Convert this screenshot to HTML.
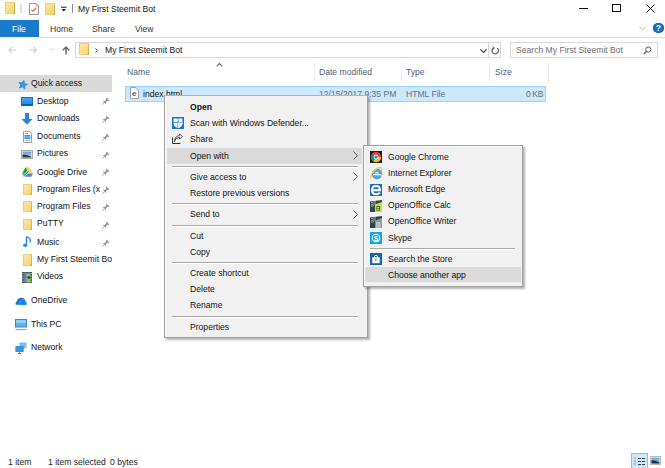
<!DOCTYPE html>
<html><head><meta charset="utf-8">
<style>
*{margin:0;padding:0;box-sizing:border-box}
html,body{width:665px;height:468px;overflow:hidden;background:#fff}
body{position:relative;font-family:"Liberation Sans",sans-serif;font-size:8.6px;color:#000}
.a{position:absolute;white-space:nowrap}
.t{position:absolute;white-space:nowrap;line-height:10px}
svg{position:absolute;overflow:visible}
.fold{position:absolute;background:linear-gradient(135deg,#fde7a0,#f6d46f);border:1px solid #ead07a;border-right-color:#dcb552}
.fold::after{content:"";position:absolute;right:-1px;bottom:-1px;width:0;height:0;border-left:2px solid transparent;border-bottom:4px solid #d9ad3e}
.pin{position:absolute}
.sep{position:absolute;height:2px;border-top:1px solid #a9a9a9;border-bottom:1px solid #fff}
.arr{position:absolute}
.hd{color:#4c607a}
.g{color:#6d6d6d}
</style></head><body>
<!-- ============ title bar ============ -->
<div class="fold" style="left:5px;top:2px;width:10px;height:12px"></div>
<div class="a" style="left:20px;top:4px;width:2px;height:9px;background:#e0e0e0"></div>
<svg style="left:29px;top:3px" width="10" height="12" viewBox="0 0 10 12">
 <path d="M0.5 0.5H7L9.5 3V11.5H0.5Z" fill="#fff" stroke="#8a8a8a" stroke-width=".9"/>
 <path d="M7 0.5V3H9.5" fill="none" stroke="#9a9a9a" stroke-width=".6"/>
 <path d="M2.4 6.6L4 8.2L7.4 4.8" fill="none" stroke="#e56a45" stroke-width="1.3"/>
</svg>
<div class="fold" style="left:45px;top:3px;width:10px;height:12px"></div>
<svg style="left:61px;top:6px" width="6" height="6" viewBox="0 0 6 6">
 <path d="M0 1.2H5.5" stroke="#111" stroke-width="1"/>
 <path d="M0.6 3H4.9L2.75 5.5Z" fill="#111"/>
</svg>
<div class="a" style="left:72px;top:4px;width:1px;height:9px;background:#8a8a8a"></div>
<div class="t" style="left:78px;top:4px;font-size:8.6px;color:#111">My First Steemit Bot</div>
<div class="a" style="left:579px;top:8px;width:9px;height:1px;background:#111"></div>
<div class="a" style="left:612px;top:4px;width:9px;height:8px;border:1px solid #111"></div>
<svg style="left:646px;top:4px" width="9" height="9" viewBox="0 0 9 9">
 <path d="M0.5 0.5L8.5 8.5M8.5 0.5L0.5 8.5" stroke="#111" stroke-width="1"/>
</svg>

<!-- ============ ribbon ============ -->
<div class="a" style="left:0;top:20px;width:39px;height:17px;background:#1979ca"></div>
<div class="t" style="left:12px;top:24px;color:#fff">File</div>
<div class="t" style="left:50px;top:24px;color:#333">Home</div>
<div class="t" style="left:92px;top:24px;color:#333">Share</div>
<div class="t" style="left:135px;top:24px;color:#333">View</div>
<div class="a" style="left:39px;top:37px;width:626px;height:1px;background:#dadbdc"></div>
<svg style="left:639px;top:26px" width="7" height="5" viewBox="0 0 7 5">
 <path d="M0.5 0.8L3.5 3.8L6.5 0.8" fill="none" stroke="#b0b0b0" stroke-width="1"/>
</svg>
<div class="a" style="left:653px;top:23px;width:10.5px;height:10px;border-radius:50%;background:#1570c6;box-shadow:inset 0 0 0 .6px #0b5fae;color:#fff;font-weight:bold;font-size:8.5px;line-height:10.5px;text-align:center">?</div>

<!-- ============ nav bar ============ -->
<svg style="left:8px;top:46px" width="9" height="8" viewBox="0 0 9 8">
 <path d="M8 4H1M4.2 0.8L1 4L4.2 7.2" fill="none" stroke="#cdcdcd" stroke-width="1.2"/>
</svg>
<svg style="left:29px;top:46px" width="9" height="8" viewBox="0 0 9 8">
 <path d="M0.5 4H7.5M4.3 0.8L7.5 4L4.3 7.2" fill="none" stroke="#cdcdcd" stroke-width="1.2"/>
</svg>
<svg style="left:49px;top:48px" width="5" height="3" viewBox="0 0 5 3">
 <path d="M0.3 0.3L2.5 2.5L4.7 0.3" fill="none" stroke="#cdcdcd" stroke-width=".9"/>
</svg>
<svg style="left:62px;top:46px" width="8" height="9" viewBox="0 0 8 9">
 <path d="M4 8.5V1.2M0.8 4.3L4 1L7.2 4.3" fill="none" stroke="#6a6a6a" stroke-width="1.5"/>
</svg>
<div class="a" style="left:75px;top:42px;width:426px;height:16px;border:1px solid #d9d9d9"></div>
<div class="fold" style="left:79px;top:43px;width:10px;height:12px"></div>
<svg style="left:95px;top:48px" width="3" height="5" viewBox="0 0 3 5">
 <path d="M0.4 0.4L2.4 2.5L0.4 4.6" fill="none" stroke="#555" stroke-width=".9"/>
</svg>
<div class="t" style="left:105px;top:45px;color:#111">My First Steemit Bot</div>
<svg style="left:480px;top:48.5px" width="7" height="4" viewBox="0 0 7 4">
 <path d="M0.4 0.4L3.5 3.4L6.6 0.4" fill="none" stroke="#444" stroke-width="1.2"/>
</svg>
<div class="a" style="left:488px;top:42px;width:1px;height:16px;background:#d9d9d9"></div>
<svg style="left:491px;top:46px" width="9" height="9" viewBox="0 0 9 9">
 <path d="M6.2 2.2A3.2 3.2 0 1 1 2.6 2" fill="none" stroke="#555" stroke-width="1.1"/>
 <path d="M1.6 0.6L3.4 2.1L1.6 3.6" fill="none" stroke="#555" stroke-width="1"/>
</svg>
<div class="a" style="left:510px;top:42px;width:148px;height:16px;border:1px solid #d9d9d9"></div>
<div class="t" style="left:516px;top:45px;color:#6d6d6d">Search My First Steemit Bot</div>
<svg style="left:643px;top:46px" width="9" height="9" viewBox="0 0 9 9">
 <circle cx="5.3" cy="3.5" r="2.6" fill="none" stroke="#555" stroke-width="1"/>
 <path d="M3.4 5.4L0.8 8" stroke="#555" stroke-width="1.3"/>
</svg>

<!-- ============ headers ============ -->
<svg style="left:216px;top:63px" width="7" height="4" viewBox="0 0 7 4">
 <path d="M0.6 3.4L3.5 0.6L6.4 3.4" fill="none" stroke="#6a6a6a" stroke-width="1.1"/>
</svg>
<div class="t hd" style="left:127px;top:67px">Name</div>
<div class="a" style="left:314px;top:63px;width:1px;height:19px;background:#ebebeb"></div>
<div class="t hd" style="left:319px;top:67px">Date modified</div>
<div class="a" style="left:401px;top:63px;width:1px;height:19px;background:#ebebeb"></div>
<div class="t hd" style="left:406px;top:67px">Type</div>
<div class="a" style="left:489px;top:63px;width:1px;height:19px;background:#ebebeb"></div>
<div class="t hd" style="left:495px;top:67px">Size</div>
<div class="a" style="left:548px;top:63px;width:1px;height:19px;background:#ebebeb"></div>

<!-- ============ selected row ============ -->
<div class="a" style="left:125px;top:86px;width:421px;height:16px;background:#cce8ff;border:1px solid #99d1ff"></div>
<svg style="left:130px;top:87px" width="9" height="12" viewBox="0 0 9 12">
 <path d="M0.5 0.5H6L8.5 3V11.5H0.5Z" fill="#fff" stroke="#a2a2a2"/>
 <path d="M6 0.5V3H8.5" fill="none" stroke="#c8c8c8" stroke-width=".6"/>
 <text x="4.3" y="9.3" font-family="Liberation Sans" font-size="8" fill="#1f6fc5" text-anchor="middle" font-weight="bold">e</text>
</svg>
<div class="t" style="left:143px;top:89px;color:#111">index.html</div>
<div class="t g" style="left:319px;top:89px">12/15/2017 9:35 PM</div>
<div class="t g" style="left:406px;top:89px">HTML File</div>
<div class="t g" style="left:526px;top:89px;letter-spacing:-.4px">0 KB</div>

<!-- ============ nav pane ============ -->
<div class="a" style="left:0;top:75px;width:112px;height:17px;background:#d9d9d9"></div>
<svg style="left:17.5px;top:79.5px" width="10" height="9" viewBox="0 0 10 10">
 <path transform="rotate(12 5 5)" d="M5 0.3L6.3 3.6L9.8 3.8L7.1 6L8 9.6L5 7.6L2 9.6L2.9 6L0.2 3.8L3.7 3.6Z" fill="#2aa0f0" stroke="#1a7cc8" stroke-width=".7" stroke-linejoin="round"/>
</svg>
<div class="t" style="left:31px;top:78px;color:#111">Quick access</div>

<!-- desktop -->
<div class="a" style="left:21px;top:97px;width:12px;height:9px;background:linear-gradient(#44a8f4,#1e8ae8);border:1px solid #1272c8;border-bottom:2px solid #0d5fae"></div>
<div class="t" style="left:37px;top:96px;color:#111">Desktop</div>
<svg class="pin" style="left:102px;top:97px" width="8" height="8" viewBox="0 0 8 8"><path d="M4.5 0.5L7.5 3.5L6.5 4L5.5 3.8L4 5.3L4.2 6.5L3.7 7L1 4.3L1.5 3.8L2.7 4L4.2 2.5L4 1.5Z" fill="#959595"/><path d="M2.3 5.7L0.3 7.7" stroke="#959595" stroke-width=".8"/></svg>

<!-- downloads -->
<svg style="left:21px;top:113px" width="12" height="12" viewBox="0 0 12 12">
 <path d="M4 0H8V6H11.5L6 11.8L0.5 6H4Z" fill="#2a86d8"/>
</svg>
<div class="t" style="left:37px;top:113px;color:#111">Downloads</div>
<svg class="pin" style="left:102px;top:115px" width="8" height="8" viewBox="0 0 8 8"><path d="M4.5 0.5L7.5 3.5L6.5 4L5.5 3.8L4 5.3L4.2 6.5L3.7 7L1 4.3L1.5 3.8L2.7 4L4.2 2.5L4 1.5Z" fill="#959595"/><path d="M2.3 5.7L0.3 7.7" stroke="#959595" stroke-width=".8"/></svg>

<!-- documents -->
<svg style="left:23px;top:131px" width="9" height="12" viewBox="0 0 9 12">
 <path d="M0.5 0.5H6.5L8.5 2.5V11.5H0.5Z" fill="#fff" stroke="#a0a0a0"/>
 <path d="M2 2.5H5" stroke="#5aa0dc" stroke-width="1"/>
 <rect x="1.5" y="4" width="6" height="4" fill="#3d8fd8"/>
 <path d="M1.5 6H7.5" stroke="#cfe6f8" stroke-width=".7"/>
 <path d="M2 9.5H7" stroke="#8fbbe0" stroke-width=".8"/>
</svg>
<div class="t" style="left:37px;top:131px;color:#111">Documents</div>
<svg class="pin" style="left:102px;top:133px" width="8" height="8" viewBox="0 0 8 8"><path d="M4.5 0.5L7.5 3.5L6.5 4L5.5 3.8L4 5.3L4.2 6.5L3.7 7L1 4.3L1.5 3.8L2.7 4L4.2 2.5L4 1.5Z" fill="#959595"/><path d="M2.3 5.7L0.3 7.7" stroke="#959595" stroke-width=".8"/></svg>

<!-- pictures -->
<svg style="left:21px;top:150px" width="12" height="9" viewBox="0 0 12 9">
 <rect x="0.5" y="0.5" width="11" height="8" fill="#fff" stroke="#a8a8a8"/>
 <defs><linearGradient id="sky" x1="0" y1="0" x2="0" y2="1"><stop offset="0" stop-color="#5a9ad8"/><stop offset="1" stop-color="#c4def2"/></linearGradient></defs>
 <rect x="1.5" y="1.5" width="9" height="6" fill="url(#sky)"/>
 <path d="M1.5 4.8Q4 4 10.5 6.8V7.5H1.5Z" fill="#2a3f3a"/>
</svg>
<div class="t" style="left:37px;top:148px;color:#111">Pictures</div>
<svg class="pin" style="left:102px;top:151px" width="8" height="8" viewBox="0 0 8 8"><path d="M4.5 0.5L7.5 3.5L6.5 4L5.5 3.8L4 5.3L4.2 6.5L3.7 7L1 4.3L1.5 3.8L2.7 4L4.2 2.5L4 1.5Z" fill="#959595"/><path d="M2.3 5.7L0.3 7.7" stroke="#959595" stroke-width=".8"/></svg>

<!-- google drive -->
<svg style="left:22px;top:167px" width="11" height="10" viewBox="0 0 11 10">
 <path d="M3.6 0.2H7.2L11 6.6H7.4Z" fill="#f7d66a"/>
 <path d="M3.6 0.2L0 6.6L1.8 9.7L5.4 3.3Z" fill="#1c9a55"/>
 <path d="M1.8 9.7H9.2L11 6.6H3.6Z" fill="#4a86e8"/>
 <path d="M0.8 6.3L2.6 8.4L6.6 4.2" fill="none" stroke="#fff" stroke-width="2.2"/>
 <path d="M0.8 6.3L2.6 8.4L6.6 4.2" fill="none" stroke="#2fae3a" stroke-width="1.3"/>
</svg>
<div class="t" style="left:37px;top:167px;color:#111">Google Drive</div>
<svg class="pin" style="left:102px;top:168px" width="8" height="8" viewBox="0 0 8 8"><path d="M4.5 0.5L7.5 3.5L6.5 4L5.5 3.8L4 5.3L4.2 6.5L3.7 7L1 4.3L1.5 3.8L2.7 4L4.2 2.5L4 1.5Z" fill="#959595"/><path d="M2.3 5.7L0.3 7.7" stroke="#959595" stroke-width=".8"/></svg>

<!-- program files x86 -->
<div class="fold" style="left:23px;top:184px;width:9px;height:11px"></div>
<div class="t" style="left:37px;top:184px;color:#111;width:63px;overflow:hidden">Program Files (x86)</div>
<svg class="pin" style="left:102px;top:186px" width="8" height="8" viewBox="0 0 8 8"><path d="M4.5 0.5L7.5 3.5L6.5 4L5.5 3.8L4 5.3L4.2 6.5L3.7 7L1 4.3L1.5 3.8L2.7 4L4.2 2.5L4 1.5Z" fill="#959595"/><path d="M2.3 5.7L0.3 7.7" stroke="#959595" stroke-width=".8"/></svg>

<!-- program files -->
<div class="fold" style="left:23px;top:201px;width:9px;height:11px"></div>
<div class="t" style="left:37px;top:201px;color:#111">Program Files</div>
<svg class="pin" style="left:102px;top:203px" width="8" height="8" viewBox="0 0 8 8"><path d="M4.5 0.5L7.5 3.5L6.5 4L5.5 3.8L4 5.3L4.2 6.5L3.7 7L1 4.3L1.5 3.8L2.7 4L4.2 2.5L4 1.5Z" fill="#959595"/><path d="M2.3 5.7L0.3 7.7" stroke="#959595" stroke-width=".8"/></svg>

<!-- putty -->
<div class="fold" style="left:23px;top:219px;width:9px;height:11px"></div>
<div class="t" style="left:37px;top:218px;color:#111">PuTTY</div>
<svg class="pin" style="left:102px;top:221px" width="8" height="8" viewBox="0 0 8 8"><path d="M4.5 0.5L7.5 3.5L6.5 4L5.5 3.8L4 5.3L4.2 6.5L3.7 7L1 4.3L1.5 3.8L2.7 4L4.2 2.5L4 1.5Z" fill="#959595"/><path d="M2.3 5.7L0.3 7.7" stroke="#959595" stroke-width=".8"/></svg>

<!-- music -->
<svg style="left:23px;top:236px" width="9" height="12" viewBox="0 0 9 12">
 <path d="M3.5 0.5V8.5" stroke="#1e88e5" stroke-width="1.4"/>
 <ellipse cx="2.2" cy="9.3" rx="2.1" ry="1.8" fill="#1e88e5"/>
 <path d="M3.5 0.5Q8.5 2.5 7 6.5" fill="none" stroke="#1e88e5" stroke-width="1.3"/>
</svg>
<div class="t" style="left:37px;top:237px;color:#111">Music</div>
<svg class="pin" style="left:102px;top:239px" width="8" height="8" viewBox="0 0 8 8"><path d="M4.5 0.5L7.5 3.5L6.5 4L5.5 3.8L4 5.3L4.2 6.5L3.7 7L1 4.3L1.5 3.8L2.7 4L4.2 2.5L4 1.5Z" fill="#959595"/><path d="M2.3 5.7L0.3 7.7" stroke="#959595" stroke-width=".8"/></svg>

<!-- my first steemit bot -->
<div class="fold" style="left:23px;top:254px;width:9px;height:12px"></div>
<div class="t" style="left:37px;top:254px;color:#111;width:75px;overflow:hidden">My First Steemit Bot</div>

<!-- videos -->
<svg style="left:22px;top:272px" width="10" height="11" viewBox="0 0 10 11">
 <rect x="0" y="0" width="10" height="11" fill="#4a4a4a"/>
 <rect x="1.6" y="0.6" width="6.8" height="9.8" fill="#4f86c6"/>
 <path d="M1.6 4.5H4V6H1.6Z" fill="#c0504d"/>
 <path d="M4.5 2L8.4 1.5V10.4H4.5Z" fill="#9bbb59"/>
 <path d="M5.5 4.5H8.4V6.5H5.5Z" fill="#223322"/>
 <path d="M0.8 1V10.5M9.2 1V10.5" stroke="#f0f0f0" stroke-width=".9" stroke-dasharray="1 1.6"/>
</svg>
<div class="t" style="left:37px;top:271px;color:#111">Videos</div>

<!-- onedrive -->
<svg style="left:15px;top:297px" width="12" height="8" viewBox="0 0 12 8">
 <path d="M0.8 7.8Q-0.3 6 1.8 4.6Q2.5 1.4 5.8 0.8Q8.8 0.4 10 2.4L7 7.8Z" fill="#1a74d0"/>
 <path d="M5.2 7.9H11.3Q12.4 6.2 11 4.9Q10.6 2.4 7.9 2.6Q5.4 2.8 5.2 4.8Q3.8 5.3 4.1 6.8Q4.4 7.9 5.2 7.9Z" fill="#1683df" stroke="#5ab8f5" stroke-width=".5"/>
</svg>
<div class="t" style="left:31px;top:295px;color:#111">OneDrive</div>

<!-- this pc -->
<svg style="left:15px;top:319px" width="12" height="12" viewBox="0 0 12 12">
 <rect x="0.5" y="0.5" width="11" height="7.5" fill="#62b4ee" stroke="#2f8ad6"/>
 <rect x="1" y="1" width="10" height="3" fill="#8fd0f7"/>
 <path d="M0.5 10.6H11.5" stroke="#9a9a9a" stroke-width="1"/>
</svg>
<div class="t" style="left:31px;top:319px;color:#111">This PC</div>

<!-- network -->
<svg style="left:15px;top:342px" width="12" height="12" viewBox="0 0 12 12">
 <rect x="4.5" y="0.5" width="7" height="6" rx=".8" fill="#7cc0ee"/>
 <rect x="0.3" y="4" width="8.5" height="6" rx=".8" fill="#3a95dd"/>
 <path d="M4.5 10V11.5M2.8 11.5H6.2" stroke="#3a7ab8" stroke-width=".9"/>
</svg>
<div class="t" style="left:31px;top:342px;color:#111">Network</div>

<!-- ============ status ============ -->
<div class="t" style="left:8px;top:457px;color:#222">1 item</div>
<div class="t" style="left:48px;top:457px;color:#222">1 item selected</div>
<div class="t" style="left:110px;top:457px;color:#222">0 bytes</div>
<div class="a" style="left:631px;top:453px;width:17px;height:16px;background:#cce8ff;border:1px solid #7fc0ee"></div>
<svg style="left:633px;top:456px" width="13" height="10" viewBox="0 0 13 10">
 <path d="M1 0.5V9.5M2.5 0.5V9.5" stroke="#c4c4c4" stroke-width=".8"/>
 <path d="M1 2H2.5M1 5H2.5M1 8H2.5" stroke="#a8a8a8" stroke-width="1"/>
 <path d="M5 2.5H8M9 2.5H12M5 5.5H8M9 5.5H12M5 8.5H8M9 8.5H12" stroke="#3a3a3a" stroke-width="1"/>
</svg>
<svg style="left:650px;top:456px" width="11" height="9" viewBox="0 0 11 9">
 <rect x="0.5" y="0.5" width="10" height="8" fill="#fff" stroke="#b8b8b8"/>
 <rect x="1.5" y="1.5" width="8" height="6" fill="#6fb0e2"/>
 <path d="M1.5 4.2Q4 3.8 9.5 6.5V7.5H1.5Z" fill="#1d2d38"/>
</svg>

<!-- ============ context menu ============ -->
<div class="a" style="left:164px;top:95px;width:204px;height:243px;background:#f1f1f1;border:1px solid #a0a0a0;border-top-color:#a9b6c2;box-shadow:inset 1px 0 0 #fbfbfb,2px 2px 2px rgba(0,0,0,.3)"></div>
<div class="a" style="left:167px;top:148px;width:195px;height:16px;background:#dadada"></div>
<div class="t" style="left:190px;top:102px;font-weight:bold;color:#111">Open</div>
<svg style="left:172px;top:117px" width="12" height="12" viewBox="0 0 12 12">
 <rect width="12" height="12" fill="#1a73c9"/>
 <path d="M1.6 1.4H10.4V6.2Q10.4 9.6 6 11.2Q1.6 9.6 1.6 6.2Z" fill="#fff"/>
 <path d="M6 1.4V11M1.6 5.4H10.4" stroke="#1a73c9" stroke-width=".8"/>
 <path d="M6 5.4H10.4V6.2Q10.4 9.6 6 11.2Z" fill="#e3f0fb"/>
</svg>
<div class="t" style="left:190px;top:118px;color:#111">Scan with Windows Defender...</div>
<svg style="left:172px;top:134px" width="11" height="10" viewBox="0 0 11 10">
 <path d="M0.5 3.5V9.5H8.5" fill="none" stroke="#333" stroke-width="1"/>
 <path d="M2.5 7.5Q3 3.5 7.5 3.3V5L10.5 2.5L7.5 0V1.6Q2.5 2 2.5 7.5Z" fill="none" stroke="#333" stroke-width=".8"/>
</svg>
<div class="t" style="left:190px;top:134px;color:#111">Share</div>
<div class="t" style="left:190px;top:151px;color:#111">Open with</div>
<svg class="arr" style="left:353px;top:151px" width="5" height="9" viewBox="0 0 5 9"><path d="M0.5 0.5L4.5 4.5L0.5 8.5" fill="none" stroke="#555" stroke-width="1"/></svg>
<div class="sep" style="left:172px;top:166px;width:186px"></div>
<div class="t" style="left:190px;top:172px;color:#111">Give access to</div>
<svg class="arr" style="left:353px;top:172px" width="5" height="9" viewBox="0 0 5 9"><path d="M0.5 0.5L4.5 4.5L0.5 8.5" fill="none" stroke="#555" stroke-width="1"/></svg>
<div class="t" style="left:190px;top:188px;color:#111">Restore previous versions</div>
<div class="sep" style="left:172px;top:203px;width:186px"></div>
<div class="t" style="left:190px;top:209px;color:#111">Send to</div>
<svg class="arr" style="left:353px;top:210px" width="5" height="9" viewBox="0 0 5 9"><path d="M0.5 0.5L4.5 4.5L0.5 8.5" fill="none" stroke="#555" stroke-width="1"/></svg>
<div class="sep" style="left:172px;top:225px;width:186px"></div>
<div class="t" style="left:190px;top:230.5px;color:#111">Cut</div>
<div class="t" style="left:190px;top:247px;color:#111">Copy</div>
<div class="sep" style="left:172px;top:262px;width:186px"></div>
<div class="t" style="left:190px;top:268px;color:#111">Create shortcut</div>
<div class="t" style="left:190px;top:284px;color:#111">Delete</div>
<div class="t" style="left:190px;top:300px;color:#111">Rename</div>
<div class="sep" style="left:172px;top:316px;width:186px"></div>
<div class="t" style="left:190px;top:321.5px;color:#111">Properties</div>

<!-- ============ submenu ============ -->
<div class="a" style="left:363px;top:145px;width:160px;height:142px;background:#f1f1f1;border:1px solid #a0a0a0;box-shadow:inset 1px 1px 0 #fbfbfb,2px 2px 2px rgba(0,0,0,.3)"></div>
<div class="a" style="left:365px;top:267px;width:156px;height:15px;background:#dadada"></div>
<!-- chrome -->
<svg style="left:370px;top:151px" width="12" height="12" viewBox="0 0 12 12">
 <rect width="12" height="12" fill="#1b1b1b"/>
 <circle cx="6" cy="6" r="5.2" fill="#db4437"/>
 <path d="M6 6L1.5 3.4A5.2 5.2 0 0 0 3.4 10.5Z" fill="#109d58"/>
 <path d="M6 6L3.4 10.5A5.2 5.2 0 0 0 11.2 6Z" fill="#f4c20d"/>
 <circle cx="6" cy="6" r="2.4" fill="#fff"/>
 <circle cx="6" cy="6" r="1.8" fill="#4285f4"/>
</svg>
<div class="t" style="left:388px;top:152px;color:#111">Google Chrome</div>
<!-- ie -->
<svg style="left:370px;top:166px" width="13" height="14" viewBox="0 0 13 14">
 <circle cx="7" cy="8" r="4.9" fill="#4aa6e6" stroke="#2f7fc0" stroke-width=".6"/>
 <path d="M4.8 7.4Q7 4.6 9.4 7.4Z" fill="#d8ecfa"/>
 <path d="M3 8.6H11.6" stroke="#e8f4fc" stroke-width="1.4"/>
 <path d="M9.6 10.2H12.2V9.6H9.6Z" fill="#f1f1f1"/>
 <path d="M1 12.5Q0 9 4 5Q8.5 1 11 1.8Q12.6 2.6 11.4 5.5" fill="none" stroke="#eec94a" stroke-width="1.3"/>
</svg>
<div class="t" style="left:388px;top:168px;color:#111">Internet Explorer</div>
<!-- edge -->
<svg style="left:370px;top:184px" width="12" height="12" viewBox="0 0 12 12">
 <rect width="12" height="12" fill="#1b6ec2"/>
 <path d="M2 6.3H10Q10 2 6 2Q2 2 2 6.2Q2 10.2 6.2 10.2Q8.6 10.2 9.8 8.6" fill="none" stroke="#fff" stroke-width="2"/>
 <path d="M3 6.3H9" stroke="#fff" stroke-width="1.6"/>
</svg>
<div class="t" style="left:388px;top:184px;color:#111">Microsoft Edge</div>
<!-- calc -->
<svg style="left:370px;top:200px" width="12" height="12" viewBox="0 0 12 12">
 <path d="M0 1.5L12 0V12H0Z" fill="#2e4a4c"/>
 <path d="M1 2.5L6 1.8M1 4.5L6 3.8M1 6.2L4 5.8" stroke="#b9c6c6" stroke-width=".8"/>
 <path d="M5 4.5L12 2V12H5Z" fill="#c9de3c"/>
 <rect x="6.5" y="6" width="3.5" height="4.5" fill="#3b4e1a"/>
 <rect x="7.3" y="6.8" width="1.9" height="1.2" fill="#e4f07a"/><rect x="7.3" y="8.6" width="1.9" height="1.2" fill="#e4f07a"/>
</svg>
<div class="t" style="left:388px;top:200px;color:#111">OpenOffice Calc</div>
<!-- writer -->
<svg style="left:370px;top:216px" width="12" height="12" viewBox="0 0 12 12">
 <path d="M0 1.5L12 0V12H0Z" fill="#2b4446"/>
 <path d="M1 2.5L6 1.8M1 4.5L6 3.8M1 6.2L4 5.8" stroke="#b9c6c6" stroke-width=".8"/>
 <path d="M5 4.5L12 2V12H5Z" fill="#8a9a9c"/>
 <path d="M6 7H10.5M6 9H10.5M6 11H10.5" stroke="#f2f2f2" stroke-width=".9"/>
</svg>
<div class="t" style="left:388px;top:216px;color:#111">OpenOffice Writer</div>
<!-- skype -->
<svg style="left:370px;top:232px" width="12" height="12" viewBox="0 0 12 12">
 <rect width="12" height="12" fill="#12a5ec"/>
 <circle cx="6" cy="6" r="4.3" fill="#fff"/>
 <circle cx="6" cy="6" r="3.3" fill="#12a5ec"/>
 <text x="6" y="8.5" font-family="Liberation Sans" font-size="7" font-weight="bold" fill="#fff" text-anchor="middle">S</text>
</svg>
<div class="t" style="left:388px;top:233px;color:#111">Skype</div>
<div class="sep" style="left:370px;top:248px;width:145px"></div>
<!-- store -->
<svg style="left:370px;top:253px" width="12" height="12" viewBox="0 0 12 12">
 <rect width="12" height="12" fill="#1464b4"/>
 <path d="M2.3 4.2H9.7V10.2H2.3Z" fill="#fff"/>
 <path d="M4.6 4.2V2.9Q6 1.6 7.4 2.9V4.2" fill="none" stroke="#fff" stroke-width=".9"/>
 <rect x="4.9" y="5.6" width="1" height="1" fill="#f25022"/><rect x="6.1" y="5.6" width="1" height="1" fill="#7fba00"/>
 <rect x="4.9" y="6.8" width="1" height="1" fill="#00a4ef"/><rect x="6.1" y="6.8" width="1" height="1" fill="#ffb900"/>
</svg>
<div class="t" style="left:388px;top:254px;color:#111">Search the Store</div>
<div class="t" style="left:388px;top:270px;color:#111">Choose another app</div>
</body></html>
